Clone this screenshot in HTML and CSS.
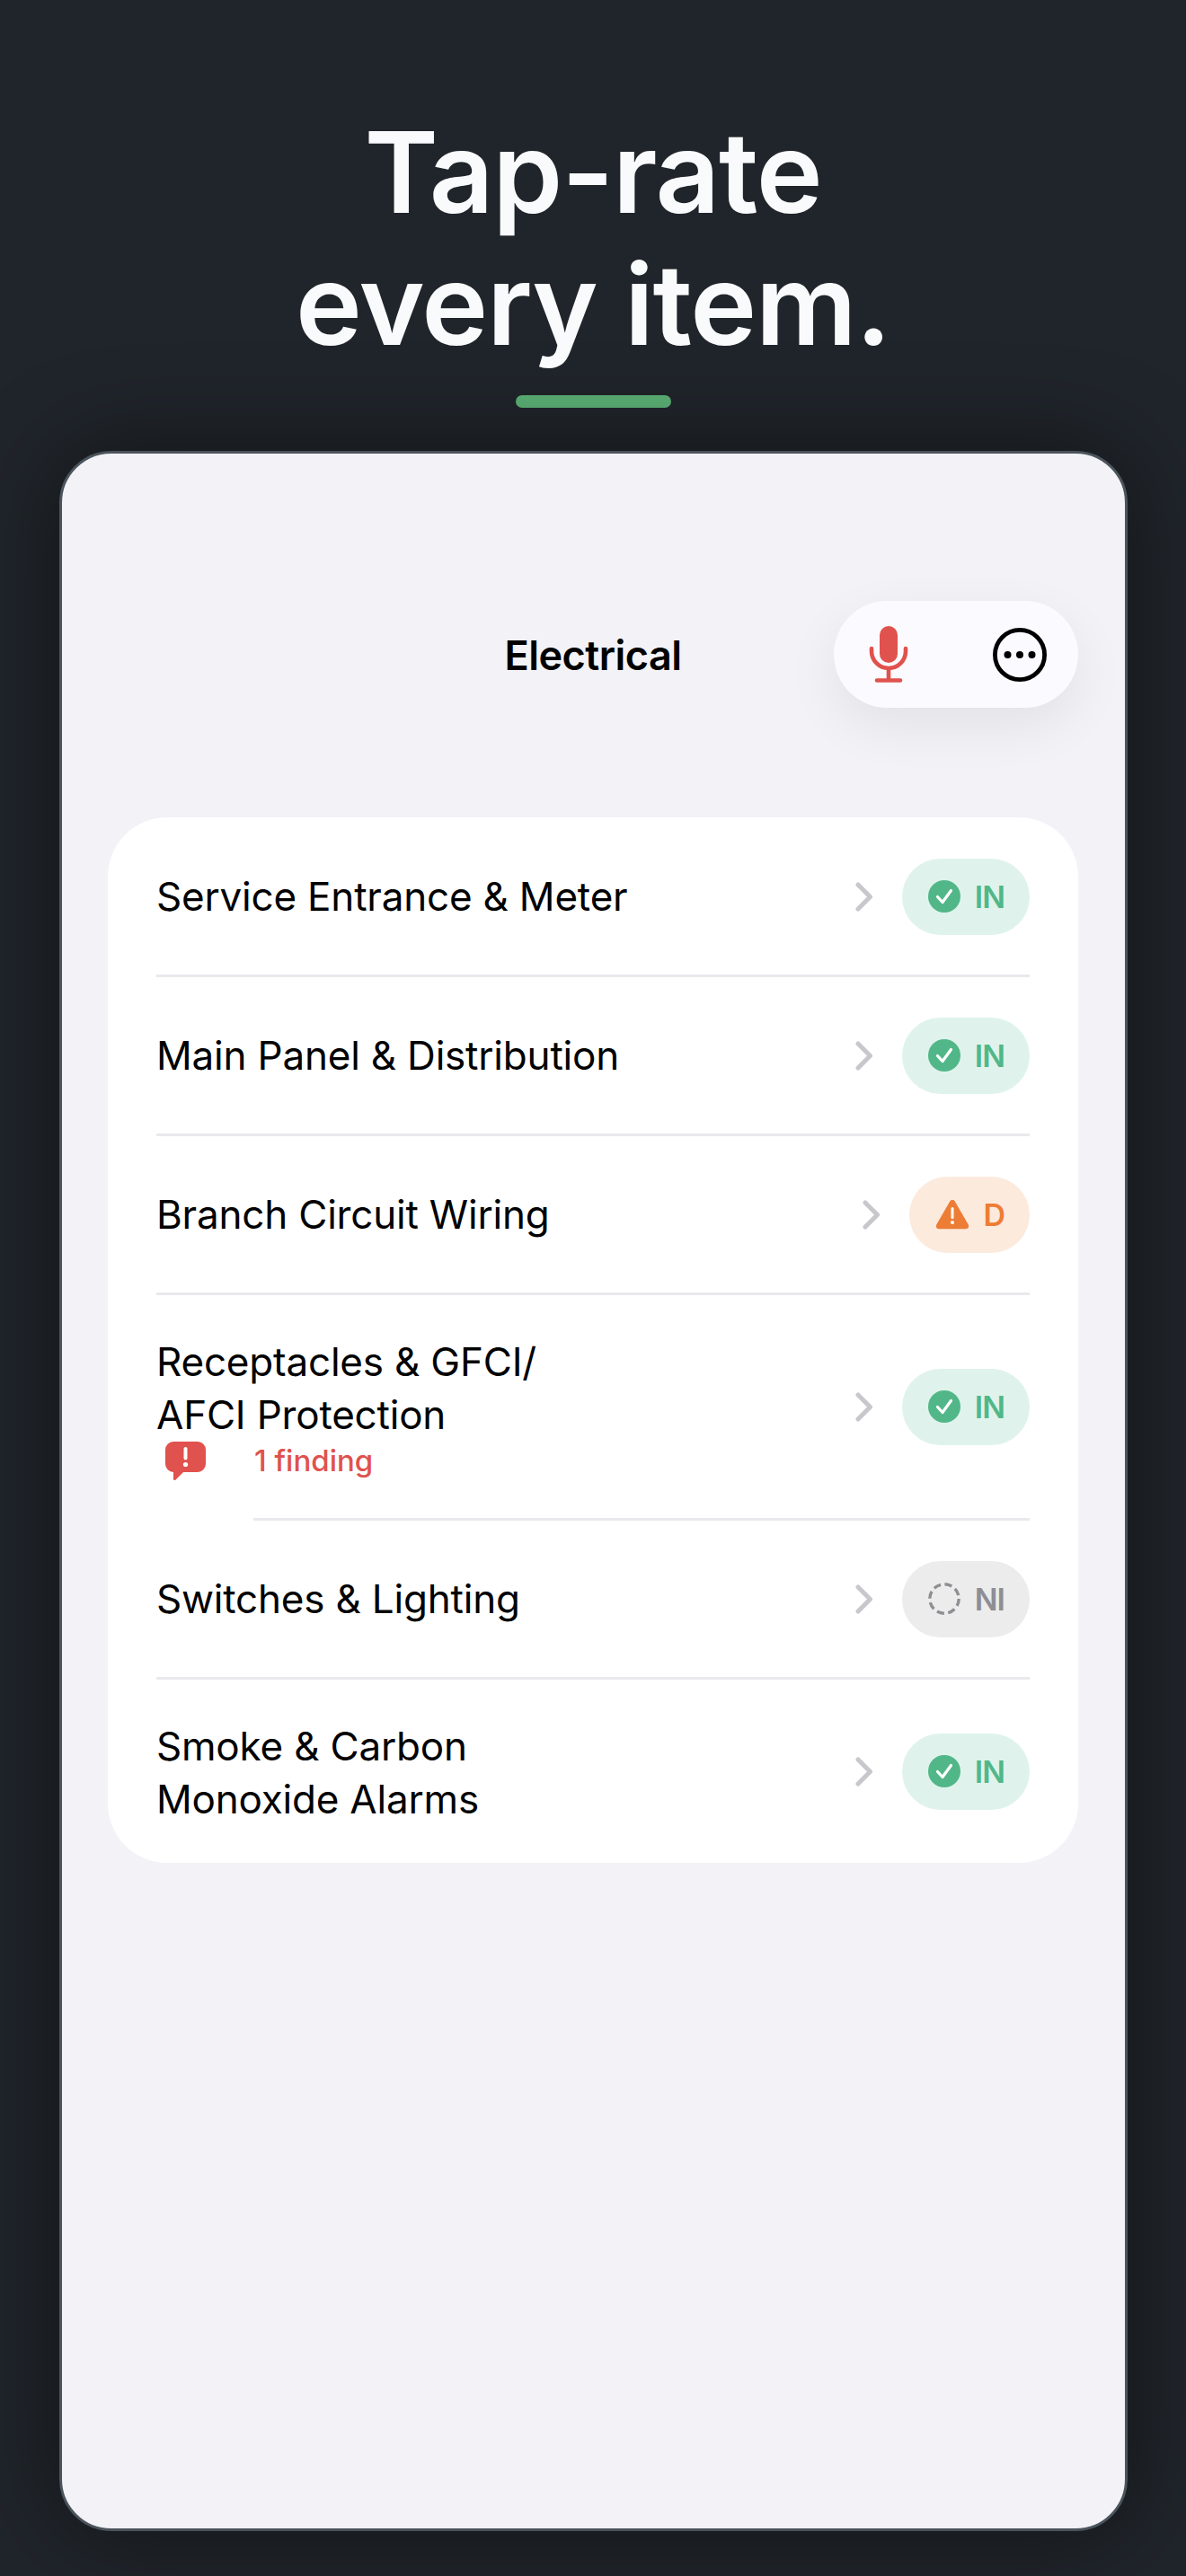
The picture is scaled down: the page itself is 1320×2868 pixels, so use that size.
FILE: index.html
```html
<!DOCTYPE html>
<html lang="en">
<head>
    <meta charset="UTF-8">
    <title>Tap-rate every item</title>
    <link rel="stylesheet" href="styles.css">
</head>
<body>

    <header class="hero">
        <h1>Tap-rate<br>every item.</h1>
        <div class="hero-bar"></div>
    </header>

    <div class="phone">
        <!-- Nav row with title and floating actions -->
        <div class="nav">
            <span></span>
            <h2>Electrical</h2>
            <div class="actions">
                <svg class="mic" width="44" height="63" viewBox="0 0 44 63">
                    <rect x="12" y="0" width="20" height="41" rx="10" fill="#e0524d"/>
                    <path d="M3 25v3a19 19 0 0 0 38 0v-3M22 47v13M9 60.5h26" fill="none" stroke="#e0524d" stroke-width="4.6" stroke-linecap="round"/>
                </svg>
                <svg width="60" height="60" viewBox="0 0 60 60">
                    <circle cx="30" cy="30" r="27.6" fill="none" stroke="#000" stroke-width="4.8"/>
                    <circle cx="16.5" cy="30" r="4" fill="#000"/>
                    <circle cx="30" cy="30" r="4" fill="#000"/>
                    <circle cx="43.5" cy="30" r="4" fill="#000"/>
                </svg>
            </div>
        </div>

        <div class="card">
            <div class="row">
                <div class="name">Service Entrance &amp; Meter</div>
                <svg class="chevron" width="20" height="33" viewBox="0 0 20 33"><path d="M3 3l13.5 13.5L3 30" fill="none" stroke="#c7c7cc" stroke-width="5" stroke-linecap="round" stroke-linejoin="round"/></svg>
                <div class="badge badge-in">
                    <svg width="36" height="36" viewBox="0 0 36 36"><circle cx="18" cy="18" r="18" fill="#52b788"/><path d="M10.5 18.5l5.5 6 9.5-13" fill="none" stroke="#fff" stroke-width="3.2" stroke-linecap="round" stroke-linejoin="round"/></svg>
                    <span>IN</span>
                </div>
            </div>
            <div class="divider"></div>

            <div class="row">
                <div class="name">Main Panel &amp; Distribution</div>
                <svg class="chevron" width="20" height="33" viewBox="0 0 20 33"><path d="M3 3l13.5 13.5L3 30" fill="none" stroke="#c7c7cc" stroke-width="5" stroke-linecap="round" stroke-linejoin="round"/></svg>
                <div class="badge badge-in">
                    <svg width="36" height="36" viewBox="0 0 36 36"><circle cx="18" cy="18" r="18" fill="#52b788"/><path d="M10.5 18.5l5.5 6 9.5-13" fill="none" stroke="#fff" stroke-width="3.2" stroke-linecap="round" stroke-linejoin="round"/></svg>
                    <span>IN</span>
                </div>
            </div>
            <div class="divider"></div>

            <div class="row">
                <div class="name">Branch Circuit Wiring</div>
                <svg class="chevron" width="20" height="33" viewBox="0 0 20 33"><path d="M3 3l13.5 13.5L3 30" fill="none" stroke="#c7c7cc" stroke-width="5" stroke-linecap="round" stroke-linejoin="round"/></svg>
                <div class="badge badge-d">
                    <svg width="36" height="34" viewBox="0 0 36 34"><path d="M18 4L33 30H3Z" fill="#ed7d35" stroke="#ed7d35" stroke-width="6.4" stroke-linejoin="round"/><path d="M18 10.5v10" stroke="#fff" stroke-width="3" stroke-linecap="round"/><circle cx="18" cy="26" r="2" fill="#fff"/></svg>
                    <span>D</span>
                </div>
            </div>
            <div class="divider"></div>

            <div class="row row-finding">
                <div class="name name-finding">
                    Receptacles &amp; GFCI/<br>AFCI Protection
                    <div class="finding">
                        <svg width="45" height="43" viewBox="0 0 45 43"><path d="M9 0h27a9 9 0 0 1 9 9v16a9 9 0 0 1-9 9H20l-8.500 8.500a1.400 1.400 0 0 1-2.500-1V34a9 9 0 0 1-9-9V9a9 9 0 0 1 9-9Z" fill="#e0524d"/><path d="M22.5 8v10.5" stroke="#fff" stroke-width="4" stroke-linecap="round"/><circle cx="22.5" cy="25.5" r="2.6" fill="#fff"/></svg>
                        <span>1 finding</span>
                    </div>
                </div>
                <svg class="chevron" width="20" height="33" viewBox="0 0 20 33"><path d="M3 3l13.5 13.5L3 30" fill="none" stroke="#c7c7cc" stroke-width="5" stroke-linecap="round" stroke-linejoin="round"/></svg>
                <div class="badge badge-in">
                    <svg width="36" height="36" viewBox="0 0 36 36"><circle cx="18" cy="18" r="18" fill="#52b788"/><path d="M10.5 18.5l5.5 6 9.5-13" fill="none" stroke="#fff" stroke-width="3.2" stroke-linecap="round" stroke-linejoin="round"/></svg>
                    <span>IN</span>
                </div>
            </div>
            <div class="divider divider-inset"></div>

            <div class="row">
                <div class="name">Switches &amp; Lighting</div>
                <svg class="chevron" width="20" height="33" viewBox="0 0 20 33"><path d="M3 3l13.5 13.5L3 30" fill="none" stroke="#c7c7cc" stroke-width="5" stroke-linecap="round" stroke-linejoin="round"/></svg>
                <div class="badge badge-ni">
                    <svg width="36" height="36" viewBox="0 0 36 36"><circle cx="18" cy="18" r="16.2" fill="none" stroke="#8e8e93" stroke-width="3.4" stroke-dasharray="8.2 4.52"/></svg>
                    <span>NI</span>
                </div>
            </div>
            <div class="divider"></div>

            <div class="row row-last">
                <div class="name name-last">Smoke &amp; Carbon<br>Monoxide Alarms</div>
                <svg class="chevron" width="20" height="33" viewBox="0 0 20 33"><path d="M3 3l13.5 13.5L3 30" fill="none" stroke="#c7c7cc" stroke-width="5" stroke-linecap="round" stroke-linejoin="round"/></svg>
                <div class="badge badge-in">
                    <svg width="36" height="36" viewBox="0 0 36 36"><circle cx="18" cy="18" r="18" fill="#52b788"/><path d="M10.5 18.5l5.5 6 9.5-13" fill="none" stroke="#fff" stroke-width="3.2" stroke-linecap="round" stroke-linejoin="round"/></svg>
                    <span>IN</span>
                </div>
            </div>
        </div>
    </div>

</body>
</html>
```

FILE: styles.css
```css
* {
    box-sizing: border-box;
}

body {
    margin: 0;
    height: 2868px;
    overflow: hidden;
    background-color: #20252b;
    font-family: Inter, "Noto Sans", sans-serif;
    color: #000;
}

.hero {
    height: 502px;
    padding-top: 118px;
    text-align: center;
}

.hero h1 {
    margin: 0;
    font-size: 125px;
    font-weight: 600;
    line-height: 147px;
    letter-spacing: -1.2px;
    color: #f9fafb;
}

.hero-bar {
    width: 173px;
    height: 14px;
    margin: 28px auto 0;
    border-radius: 7px;
    background-color: #5cb176;
}

.phone {
    width: 1189px;
    height: 2316px;
    margin-left: 66px;
    padding: 164px 52px 0 51px;
    background-color: #f2f2f7;
    border: 3px solid #4b545c;
    border-radius: 58px;
    box-shadow: 0 0 110px rgba(0, 0, 0, 0.45);
}

.nav {
    display: grid;
    grid-template-columns: 1fr auto 1fr;
    align-items: center;
}

.nav h2 {
    margin: 0;
    padding-top: 2px;
    font-size: 45px;
    font-weight: 600;
    letter-spacing: -0.5px;
}

.actions {
    justify-self: end;
    display: flex;
    align-items: center;
    justify-content: space-between;
    width: 272px;
    height: 119px;
    padding: 0 35px 0 39px;
    border-radius: 60px;
    background-color: #fbfaff;
    box-shadow: 0 20px 60px rgba(0, 0, 0, 0.07);
}

.card {
    margin-top: 122px;
    padding: 1px 54px 0;
    background-color: #fff;
    border-radius: 66px;
}

.row {
    display: flex;
    align-items: center;
    height: 174px;
}

.row-finding {
    height: 248px;
}

.row-last {
    height: 204px;
}

.name {
    flex: 1;
    font-size: 44px;
    line-height: 59px;
    letter-spacing: -0.2px;
}

.name-finding {
    margin-top: 2px;
}

.name-last {
    margin-top: 4px;
}

.finding {
    display: flex;
    align-items: center;
    gap: 54px;
    padding-left: 10px;
    font-size: 33px;
    line-height: 43px;
    font-weight: 500;
    letter-spacing: 0;
    color: #e0524d;
}

.chevron {
    margin-right: 32px;
}

.badge {
    display: flex;
    align-items: center;
    gap: 16px;
    height: 85px;
    padding: 0 28px 0 29px;
    border-radius: 43px;
    font-size: 34px;
    font-weight: 600;
    letter-spacing: -1px;
}

.badge-in {
    background-color: #dff3ec;
    color: #52b788;
}

.badge-d {
    padding-left: 30px;
    background-color: #fceadd;
    color: #ed7d35;
}

.badge-ni {
    background-color: #ececec;
    color: #8e8e93;
}

.divider {
    height: 3px;
    background-color: #e9e9ed;
}

.divider-inset {
    margin-left: 108px;
}
```
